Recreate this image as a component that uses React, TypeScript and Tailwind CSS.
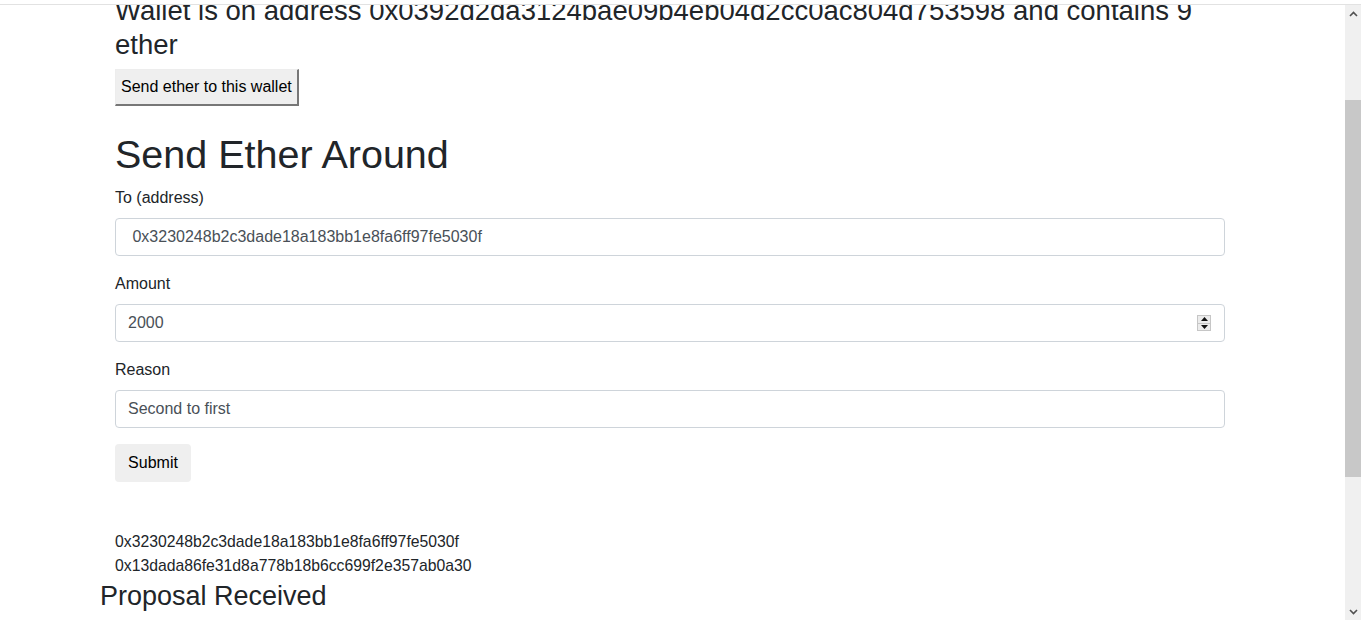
import { useState } from "react";

const labelCls = "block text-[16px] leading-6 text-[#212529] mb-2";
const inputCls =
  "block w-full h-[38px] rounded-[4px] border border-[#ced4da] bg-white px-3 text-[16px] leading-6 text-[#495057] outline-none";

function Spinner() {
  return (
    <div className="absolute right-[14px] top-[11px] flex h-[16px] w-[14px] flex-col border border-[#c6c6c6] bg-[#ececec]">
      <div className="flex flex-1 items-center justify-center border-b border-[#c6c6c6]">
        <svg width="7" height="4" viewBox="0 0 7 4">
          <path d="M0 4 L3.5 0 L7 4 Z" fill="#111" />
        </svg>
      </div>
      <div className="flex flex-1 items-center justify-center">
        <svg width="7" height="4" viewBox="0 0 7 4">
          <path d="M0 0 L3.5 4 L7 0 Z" fill="#111" />
        </svg>
      </div>
    </div>
  );
}

function Scrollbar() {
  return (
    <div className="flex w-[16px] shrink-0 flex-col bg-[#f0f0f0]">
      <div className="flex h-[17px] items-center justify-center">
        <svg width="9" height="6" viewBox="0 0 9 6">
          <path d="M1 5 L4.5 1.5 L8 5" stroke="#505050" strokeWidth="1.6" fill="none" />
        </svg>
      </div>
      <div className="h-[78px]" />
      <div className="h-[377px] bg-[#c8c8c8]" />
      <div className="flex-1" />
      <div className="flex h-[17px] items-center justify-center">
        <svg width="9" height="6" viewBox="0 0 9 6">
          <path d="M1 1 L4.5 4.5 L8 1" stroke="#505050" strokeWidth="1.6" fill="none" />
        </svg>
      </div>
    </div>
  );
}

export default function App() {
  const [to, setTo] = useState(" 0x3230248b2c3dade18a183bb1e8fa6ff97fe5030f");
  const [amount, setAmount] = useState("2000");
  const [reason, setReason] = useState("Second to first");

  return (
    <div className="flex h-[620px] flex-col overflow-hidden bg-white font-['Liberation_Sans',Arial,sans-serif] text-[#212529]">
      {/* browser edge */}
      <div className="h-[5px] shrink-0 border-b border-[#e2e2e2] bg-white" />

      <div className="flex min-h-0 flex-1">
        <main className="min-w-0 flex-1 overflow-hidden">
          <div className="mt-[-11px]">
            <div className="ml-[115px] w-[1110px]">
              <h3 className="mb-2 text-[27.5px] leading-[33.6px]">
                Wallet is on address 0x0392d2da3124bae09b4eb04d2cc0ac804d753598 and contains 9 ether
              </h3>
              <button className="h-[37px] border-t border-l border-r-2 border-b-2 border-t-[#ededed] border-l-[#ededed] border-r-[#777] border-b-[#777] bg-[#efefef] px-[5px] text-[16px] text-black">
                Send ether to this wallet
              </button>

              <h1 className="mt-[24px] mb-2 text-[39.5px] leading-[48px]">Send Ether Around</h1>

              <form onSubmit={(e) => e.preventDefault()}>
                <div className="mb-4">
                  <label className={labelCls}>To (address)</label>
                  <input className={inputCls} value={to} onChange={(e) => setTo(e.target.value)} />
                </div>
                <div className="mb-4">
                  <label className={labelCls}>Amount</label>
                  <div className="relative">
                    <input className={inputCls} value={amount} onChange={(e) => setAmount(e.target.value)} />
                    <Spinner />
                  </div>
                </div>
                <div className="mb-4">
                  <label className={labelCls}>Reason</label>
                  <input className={inputCls} value={reason} onChange={(e) => setReason(e.target.value)} />
                </div>
                <button
                  type="submit"
                  className="h-[38px] w-[76px] rounded-[4px] bg-[#efefef] text-[16px] text-black"
                >
                  Submit
                </button>
              </form>

              <div className="mt-[48px] text-[15.75px] leading-[24px]">
                <div>0x3230248b2c3dade18a183bb1e8fa6ff97fe5030f</div>
                <div>0x13dada86fe31d8a778b18b6cc699f2e357ab0a30</div>
              </div>
            </div>
            <h3 className="ml-[100px] mt-[2px] text-[27px] leading-[33.6px]">Proposal Received</h3>
          </div>
        </main>
        <Scrollbar />
      </div>
    </div>
  );
}
